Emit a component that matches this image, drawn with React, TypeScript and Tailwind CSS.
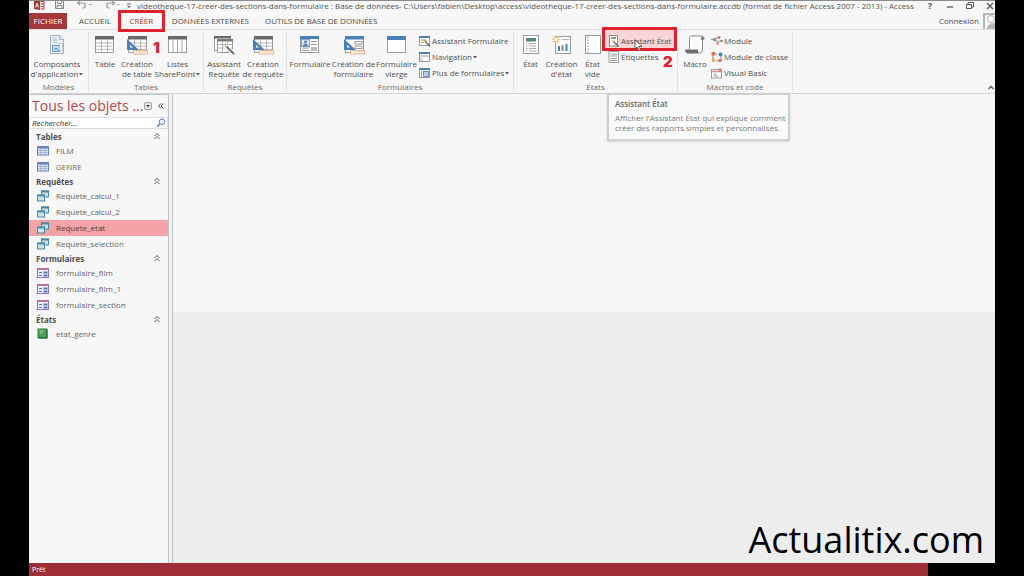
import React from "react";

type IconName =
  | "parts" | "table" | "tableDesign" | "list" | "queryWizard" | "form" | "formDesign"
  | "formBlank" | "report" | "reportDesign" | "reportBlank" | "macro";

const Ruler = () => (
  <>
    <path d="M1 4v11h12z" fill="#4a80ba" />
    <path d="M4 10v2.5h3z" fill="#fff" />
    <rect x="7.500" y="15.500" width="14" height="3.500" fill="#fff3e6" stroke="#e8b48a" />
    <path d="M10.500 16v1.500M13.500 16v1.500M16.500 16v1.500M19 16v1.500" stroke="#e8b48a" strokeWidth=".7" />
  </>
);

const Grid = ({ x = 1 }: { x?: number }) => (
  <g transform={`translate(${x - 1} 0)`}>
    <rect x="1.500" y="1.500" width="18" height="16" fill="#fff" stroke="#9a9a9a" />
    <rect x="1" y="1" width="19" height="3.500" fill="#686868" />
    <path d="M2 8h17M2 11.200h17M2 14.400h17M7.500 4v13M13.500 4v13" stroke="#a5a5a5" strokeWidth=".8" />
  </g>
);

const BigIcon = ({ name }: { name: IconName }) => (
  <svg viewBox="0 0 22 20" className="h-5 w-[22px] shrink-0" fill="none" aria-hidden="true">
    {name === "parts" && (
      <>
        <path d="M4.500 .5h9l4 4v14h-13z" fill="#eef2f6" stroke="#9db0c4" />
        <path d="M13.500 .5v4h4" stroke="#9db0c4" />
        <path d="M6.500 3h5M6.500 5h5M6.500 7h5" stroke="#b3c3d3" />
        <rect x="6.500" y="10.500" width="7" height="6" fill="#c9dbec" stroke="#6c98c6" />
        <rect x="13.500" y="8.500" width="3" height="7" fill="#fff" stroke="#9db0c4" strokeWidth=".7" />
        <path d="M8 15l2-2 2.500 2.500" stroke="#4a80ba" />
      </>
    )}
    {name === "table" && <Grid />}
    {name === "tableDesign" && (<><Grid x={2} /><Ruler /></>)}
    {name === "list" && (
      <>
        <rect x="1.500" y="1.500" width="18" height="16" fill="#fff" stroke="#9a9a9a" />
        <rect x="1" y="1" width="19" height="3.500" fill="#686868" />
        <path d="M6 4v13M10.500 4v13M15 4v13" stroke="#a5a5a5" />
      </>
    )}
    {name === "queryWizard" && (
      <>
        <rect x="1.500" y="1.500" width="16" height="14" fill="#fff" stroke="#9a9a9a" />
        <rect x="1" y="1" width="17" height="2.500" fill="#686868" />
        <rect x="4.500" y="4.500" width="15" height="13" fill="#fff" stroke="#9a9a9a" />
        <rect x="4" y="4" width="16" height="2.500" fill="#7a7a7a" />
        <path d="M5 9.500h14M5 13h14M9.500 6v11M14.500 6v11" stroke="#a5a5a5" strokeWidth=".8" />
        <path d="M12 10l9 9" stroke="#f7f7f7" strokeWidth="4.500" />
        <path d="M13.500 11.500l7.500 7.500" stroke="#747474" strokeWidth="2" />
        <path d="M12.500 8v4M10.500 10h4" stroke="#e5b07a" />
      </>
    )}
    {name === "form" && (
      <>
        <rect x="1.500" y="1.500" width="18" height="16" fill="#fff" stroke="#9a9a9a" />
        <rect x="1" y="1" width="19" height="3" fill="#4a80ba" />
        <rect x="2.500" y="4.500" width="8" height="7" fill="#dce8f4" stroke="#7b9fc8" />
        <circle cx="6.500" cy="7" r="1.400" fill="#4a80ba" />
        <path d="M4 11c0-3 5-3 5 0z" fill="#4a80ba" />
        <path d="M12 6.500h6M12 9.500h6M3 13h7M3 15.500h7" stroke="#9a9a9a" />
        <rect x="12" y="12" width="6" height="4" fill="#bcbcbc" />
      </>
    )}
    {name === "formDesign" && (
      <>
        <rect x="2.500" y="1.500" width="18" height="16" fill="#fff" stroke="#9a9a9a" />
        <rect x="2" y="1" width="19" height="3.500" fill="#4a80ba" />
        <rect x="12" y="6.500" width="7" height="2.500" stroke="#9a9a9a" />
        <rect x="12" y="11" width="7" height="2.500" stroke="#9a9a9a" />
        <Ruler />
      </>
    )}
    {name === "formBlank" && (
      <>
        <rect x="1.500" y="1.500" width="18" height="16" fill="#fff" stroke="#9a9a9a" />
        <rect x="1" y="1" width="19" height="4" fill="#4a80ba" />
      </>
    )}
    {name === "report" && (
      <>
        <rect x="3.500" y=".5" width="15" height="18" fill="#fff" stroke="#9a9a9a" />
        <rect x="6" y="3" width="10" height="3.500" fill="#4f8a72" />
        <path d="M6 8.500h1.500M9 8.500h7M6 11h1.500M9 11h7M6 13.500h1.500M9 13.500h7M6 16h1.500M9 16h7" stroke="#a8a8a8" />
      </>
    )}
    {name === "reportDesign" && (
      <>
        <rect x="4.500" y="1.500" width="15" height="17" fill="#fff" stroke="#9a9a9a" />
        <path d="M11 4.500h7" stroke="#b5b5b5" />
        <path d="M8 16v-5" stroke="#4a80ba" strokeWidth="2" />
        <path d="M11.500 16v-6" stroke="#888" strokeWidth="2" />
        <path d="M15.500 16v-7" stroke="#4a80ba" strokeWidth="2" />
        <path d="M5 0v9M.5 4.500h9M2 1.500l6 6M8 1.500l-6 6" stroke="#f0c283" strokeWidth="1.200" />
        <circle cx="5" cy="4.500" r="1.500" fill="#fff" />
      </>
    )}
    {name === "reportBlank" && (
      <>
        <rect x="3.500" y=".5" width="15" height="18" fill="#fff" stroke="#9a9a9a" />
        <path d="M6 1.500v17" stroke="#8a8a8a" strokeDasharray="1.500 1.500" />
      </>
    )}
    {name === "macro" && (
      <>
        <path d="M5.500 14V3.500c0-2 1-2.500 2-2.500h11v13c0 3-1 4-3 4" fill="#fff" stroke="#858585" />
        <path d="M18 1c3 0 3 4 1.500 4H17V2.500z" fill="#858585" />
        <path d="M1 14.500h13c0 2 .5 4 2 4H4c-2 0-3-2-3-4z" fill="#707070" />
      </>
    )}
  </svg>
);

type SmallName =
  | "formWizard" | "navigation" | "moreForms" | "reportWizard" | "labels" | "module" | "classModule" | "vb";

const SmallIcon = ({ name }: { name: SmallName }) => (
  <svg viewBox="0 0 12 12" className="size-3 shrink-0" fill="none" aria-hidden="true">
    {(name === "formWizard" || name === "navigation" || name === "moreForms") && (
      <>
        <rect x=".5" y="1.500" width="10" height="9" fill="#fff" stroke="#9a9a9a" />
        <rect x="0" y="1" width="11" height="2" fill="#4a80ba" />
      </>
    )}
    {name === "formWizard" && (
      <><path d="M2 5h4M2 7.500h3" stroke="#9a9a9a" /><path d="M6 6l5 5.500" stroke="#6a6a6a" strokeWidth="1.500" /><path d="M6 4v3M4.500 5.500h3" stroke="#e5a04e" /></>
    )}
    {name === "navigation" && (
      <><path d="M1 5h9" stroke="#9a9a9a" /><rect x="1" y="5" width="3" height="5" fill="#d5dde6" /></>
    )}
    {name === "moreForms" && (
      <><path d="M2.500 4v6" stroke="#9a9a9a" /><rect x="4.500" y="4.500" width="5" height="5" fill="#b9d0e6" stroke="#4a80ba" strokeWidth=".8" /></>
    )}
    {name === "reportWizard" && (
      <>
        <rect x="1.500" y=".5" width="8" height="10.500" fill="#fff" stroke="#8b8b8b" />
        <path d="M3 3h5" stroke="#4a8a6c" strokeWidth="1.500" />
        <path d="M6 7l4.500 4.500" stroke="#6a6a6a" strokeWidth="1.500" />
        <path d="M5.500 5v3M4 6.500h3" stroke="#e5a04e" strokeWidth=".8" />
      </>
    )}
    {name === "labels" && (
      <>
        <rect x="1" y=".5" width="9.500" height="11" fill="#fff" stroke="#9a9a9a" />
        <path d="M2.500 3h6.500M2.500 5h6.500M2.500 7.500h6.500M2.500 9.500h6.500" stroke="#9a9a9a" />
      </>
    )}
    {name === "module" && (
      <>
        <path d="M0 4.500h4l3-2.500M4 4.500l4 3.500M7.500 6h4" stroke="#888" />
        <circle cx="3.500" cy="4.500" r="1.700" fill="#7a9a86" />
        <circle cx="8" cy="2.500" r="1.500" fill="#d97a6a" />
        <circle cx="6.500" cy="8.500" r="1.500" fill="#e29a8e" />
        <circle cx="10.500" cy="6" r="1.300" fill="#888" />
      </>
    )}
    {name === "classModule" && (
      <>
        <path d="M2 10V3h4M5 10h5V4" stroke="#888" />
        <rect x=".5" y="1" width="3.500" height="3.500" fill="#e0734e" />
        <circle cx="9.500" cy="3.500" r="2" fill="#4a80ba" />
        <circle cx="2.500" cy="9.500" r="1.800" fill="#eab04e" />
        <rect x="7.500" y="8" width="3" height="3" fill="#d97a6a" />
      </>
    )}
    {name === "vb" && (
      <>
        <rect x=".5" y="2.500" width="10" height="8.500" fill="#fff" stroke="#9a9a9a" />
        <path d="M1 4.500h9" stroke="#d99080" strokeWidth="1.500" />
        <path d="M2.500 7h3M2.500 9h5" stroke="#9a9a9a" />
        <circle cx="9" cy="3" r="1.800" fill="#e0836e" />
      </>
    )}
  </svg>
);

const Caret = () => (
  <svg viewBox="0 0 4 3" className="ml-px inline-block h-[3px] w-1 align-middle" aria-hidden="true">
    <path d="M0 0h4L2 2.500z" fill="#555" />
  </svg>
);

const Big = ({ icon, lines, width, caret }: { icon: IconName; lines: string[]; width: string; caret?: boolean }) => (
  <button type="button" className={`flex shrink-0 flex-col items-center pt-0.5 ${width}`}>
    <BigIcon name={icon} />
    <span className="mt-1 text-center leading-[10px] whitespace-nowrap">
      {lines.map((line, i) => (
        <span key={line} className="block">
          {line}
          {caret && i === lines.length - 1 && <Caret />}
        </span>
      ))}
    </span>
  </button>
);

const Small = ({ icon, label, caret }: { icon: SmallName; label: string; caret?: boolean }) => (
  <button type="button" className="flex h-4 items-center gap-px whitespace-nowrap">
    <SmallIcon name={icon} />
    <span>{label}{caret && <Caret />}</span>
  </button>
);

const Group = ({ title, width, children }: { title: string; width: string; children: React.ReactNode }) => (
  <section aria-label={title} className={`flex shrink-0 flex-col justify-between border-r border-[#e2e2e2] ${width}`}>
    <div className="flex pt-0.5 pl-px">{children}</div>
    <h2 className="text-center leading-[10px] text-[#6a6a6a]">{title}</h2>
  </section>
);

type ItemKind = "table" | "query" | "form" | "report";

const ItemIcon = ({ kind }: { kind: ItemKind }) => (
  <svg viewBox="0 0 12 12" className="size-3 shrink-0" fill="none" aria-hidden="true">
    {kind === "table" && (
      <>
        <rect x=".5" y="1.500" width="11" height="8.500" fill="#dfe8f8" stroke="#6a83bd" />
        <rect x="0" y="1" width="12" height="2.500" fill="#6a83bd" />
        <path d="M4 3v7M8 3v7M1 5.500h10M1 7.700h10" stroke="#8fa8d8" strokeWidth=".8" />
      </>
    )}
    {kind === "query" && (
      <>
        <rect x="4.500" y="1" width="7" height="6" fill="#c6e2ec" stroke="#4f87a0" />
        <rect x="4" y=".5" width="8" height="2" fill="#4f87a0" />
        <rect x=".5" y="5" width="7" height="6" fill="#c6e2ec" stroke="#4f87a0" />
        <rect x="0" y="4.500" width="8" height="2" fill="#4797a8" />
      </>
    )}
    {kind === "form" && (
      <>
        <rect x=".5" y="1.500" width="11" height="9" fill="#f3f1fb" stroke="#8577b0" />
        <rect x="0" y="1" width="12" height="2" fill="#b5749a" />
        <path d="M2 5.500h3M2 8.500h3" stroke="#5f76bd" />
        <path d="M6.500 5.500h4M6.500 8.500h4" stroke="#5f76bd" strokeWidth="2" />
      </>
    )}
    {kind === "report" && (
      <>
        <rect x="1" y="1" width="9" height="9" fill="#47a055" stroke="#35783f" />
        <path d="M2.500 3h4M2.500 5h3" stroke="#a6dcae" />
        <path d="M10 2v8H2" stroke="#2b5c33" />
      </>
    )}
  </svg>
);

const sections: { title: string; kind: ItemKind; items: string[] }[] = [
  { title: "Tables", kind: "table", items: ["FILM", "GENRE"] },
  { title: "Requêtes", kind: "query", items: ["Requete_calcul_1", "Requete_calcul_2", "Requete_etat", "Requete_selection"] },
  { title: "Formulaires", kind: "form", items: ["formulaire_film", "formulaire_film_1", "formulaire_section"] },
  { title: "États", kind: "report", items: ["etat_genre"] },
];

const TitleBar = () => (
  <header className="flex h-[13px] items-start border-t border-[#8a8a8a] pr-px text-[#555]">
    <svg viewBox="0 0 108 12" className="h-3 w-[108px] shrink-0" fill="none" aria-hidden="true">
      <path d="M5 0h6v9L5 8z" fill="#a4373a" />
      <path d="M6.500 6.500L8 2l1.500 4.500M7 5h2" stroke="#fff" strokeWidth=".8" />
      <path d="M11.500.500h3.500v7.500h-3.500M11.500 3h3M11.500 5.500h3" stroke="#a4373a" />
      <path d="M26.500 0v7.500h8V0M28.500 0v2.500h4V0M28 7.500v-3h5v3" stroke="#888" />
      <path d="M49 2h5c3 0 3 5 0 5h-1M51 0l-2.500 2L51 4" stroke="#999" strokeWidth="1.200" />
      <path d="M60 3h3l-1.500 1.500z" fill="#999" />
      <path d="M85 2h-5c-3 0-3 5 0 5h1M83 0l2.500 2L83 4" stroke="#999" strokeWidth="1.200" />
      <path d="M88 3h3l-1.500 1.500z" fill="#999" />
      <path d="M98 3h4" stroke="#666" />
      <path d="M98 5h4l-2 2z" fill="#666" />
    </svg>
    <h1 className="min-w-0 truncate text-[8px] leading-[10px]">
      videotheque-17-creer-des-sections-dans-formulaire : Base de données- C:\Users\fabien\Desktop\access\videotheque-17-creer-des-sections-dans-formulaire.accdb (format de fichier Access 2007 - 2013) - Access
    </h1>
    <div className="ml-auto flex shrink-0 gap-3">
      <button type="button" className="w-2 text-[9px] leading-[9px] font-bold" aria-label="Aide">?</button>
      <button type="button" aria-label="Réduire">
        <svg viewBox="0 0 8 8" className="size-2"><path d="M1 5h6" stroke="#555" strokeWidth="1.300" /></svg>
      </button>
      <button type="button" aria-label="Restaurer">
        <svg viewBox="0 0 8 8" className="size-2" fill="none"><path d="M.5 2.500h5v4h-5zM2 2V.5h5.500V5H6" stroke="#555" /></svg>
      </button>
      <button type="button" aria-label="Fermer">
        <svg viewBox="0 0 8 8" className="size-2"><path d="M1 1l6 6M7 1L1 7" stroke="#555" strokeWidth="1.300" /></svg>
      </button>
    </div>
  </header>
);

const Tabs = () => (
  <nav className="flex h-[17px] items-stretch border-b border-[#dcdcdc] text-[8px] leading-4 whitespace-nowrap text-[#4a4a4a]">
    <button type="button" className="w-[38px] bg-[#a4373a] text-white">FICHIER</button>
    <button type="button" className="ml-3">ACCUEIL</button>
    <button type="button" className="relative ml-[7px] w-[47px] text-[#a4373a]">
      CRÉER
      <span className="pointer-events-none absolute inset-x-0 -top-[3px] -bottom-[3px] border-3 border-[#e0202c]" />
    </button>
    <button type="button" className="ml-[7px]">DONNÉES EXTERNES</button>
    <button type="button" className="ml-4">OUTILS DE BASE DE DONNÉES</button>
    <button type="button" className="ml-auto flex gap-1">
      Connexion
      <svg viewBox="0 0 12 16" className="h-4 w-3" aria-hidden="true">
        <path d="M0 0h12v16H0z" fill="#b5b5b5" />
        <path d="M2 2h10v8c-4 0-7 1-8 6H2z" fill="#f7f7f7" />
        <circle cx="8" cy="6" r="3.500" fill="#fff" stroke="#b5b5b5" />
      </svg>
    </button>
  </nav>
);

const Ribbon = () => (
  <div className="relative flex h-16 border-b border-[#d4d4d4] py-px text-[8px] text-[#4f4f4f]">
    <Group title="Modèles" width="w-[60px]">
      <Big icon="parts" lines={["Composants", "d'application"]} width="w-[54px]" caret />
    </Group>
    <Group title="Tables" width="w-[115px]">
      <Big icon="table" lines={["Table"]} width="w-[30px]" />
      <Big icon="tableDesign" lines={["Création", "de table"]} width="w-[34px]" />
      <Big icon="list" lines={["Listes", "SharePoint"]} width="w-[47px]" caret />
    </Group>
    <Group title="Requêtes" width="w-[83px]">
      <Big icon="queryWizard" lines={["Assistant", "Requête"]} width="w-[38px]" />
      <Big icon="tableDesign" lines={["Création", "de requête"]} width="w-[40px]" />
    </Group>
    <Group title="Formulaires" width="w-[227px]">
      <Big icon="form" lines={["Formulaire"]} width="w-[44px]" />
      <Big icon="formDesign" lines={["Création de", "formulaire"]} width="w-[43px]" />
      <Big icon="formBlank" lines={["Formulaire", "vierge"]} width="w-[43px]" />
      <div className="ml-px flex flex-col">
        <Small icon="formWizard" label="Assistant Formulaire" />
        <Small icon="navigation" label="Navigation" caret />
        <Small icon="moreForms" label="Plus de formulaires" caret />
      </div>
    </Group>
    <Group title="États" width="w-[164px]">
      <Big icon="report" lines={["État"]} width="w-[31px]" />
      <Big icon="reportDesign" lines={["Création", "d'état"]} width="w-[31px]" />
      <Big icon="reportBlank" lines={["État", "vide"]} width="w-[31px]" />
      <div className="flex flex-col">
        <div className="relative isolate">
          <span className="pointer-events-none absolute -inset-x-1.5 -top-1.5 -bottom-0.5 -z-10 border-3 border-[#e0202c] bg-[#f9d4d4]" />
          <Small icon="reportWizard" label="Assistant État" />
          <svg viewBox="0 0 9 13" className="absolute top-1.5 left-[26px] h-[13px] w-[9px]" aria-hidden="true">
            <path d="M1 1v9l2-2 2 4 1.500-1-2-3.500H8z" fill="#fff" stroke="#444" strokeWidth=".8" />
          </svg>
        </div>
        <Small icon="labels" label="Étiquettes" />
      </div>
    </Group>
    <Group title="Macros et code" width="w-[115px]">
      <Big icon="macro" lines={["Macro"]} width="w-[32px]" />
      <div className="flex flex-col">
        <Small icon="module" label="Module" />
        <Small icon="classModule" label="Module de classe" />
        <Small icon="vb" label="Visual Basic" />
      </div>
    </Group>
    <button type="button" className="mt-auto mr-px mb-0.5 ml-auto" aria-label="Réduire le ruban">
      <svg viewBox="0 0 6 5" className="h-[5px] w-1.5" fill="none"><path d="M.5 4L3 1.500 5.500 4" stroke="#555" strokeWidth="1.300" /></svg>
    </button>
    <span className="absolute top-2.5 left-[124px] font-[Inter,sans-serif] text-[15px] leading-4 font-black text-[#e0202c]">1</span>
    <span className="absolute top-6 left-[634px] font-[Inter,sans-serif] text-[15px] leading-4 font-black text-[#e0202c]">2</span>
    <div role="tooltip" className="absolute top-[63px] left-[578px] z-10 w-[183px] border-2 border-[#cfcfcf] bg-[#fafafa] px-1.5 pt-1 pb-1.5 shadow-sm">
      <p className="mb-1 leading-[10px] font-semibold text-[#666]">Assistant État</p>
      <p className="leading-[10px] whitespace-nowrap text-[#7a7a7a]">
        Afficher l'Assistant État qui explique comment<br />créer des rapports simples et personnalisés.
      </p>
    </div>
  </div>
);

const Sidebar = () => (
  <aside className="flex w-[144px] shrink-0 flex-col border-r border-[#bfc3c7] bg-[#f0f0f0] pr-[3px]">
    <div className="flex grow flex-col border-t border-r border-[#bfc3c7] bg-[#f7f7f7]">
      <div className="flex h-[22px] items-center pl-[3px] text-[#b1474b]">
        <h2 className="text-[14px] leading-5 whitespace-nowrap">Tous les objets ...</h2>
        <button type="button" className="ml-auto" aria-label="Menu des objets">
          <svg viewBox="0 0 9 9" className="size-2"><rect x=".5" y=".5" width="8" height="8" rx="2" fill="#e3e6ea" stroke="#8c939b" /><path d="M2.500 3.500h4L4.500 6z" fill="#333" /></svg>
        </button>
        <button type="button" className="mr-1 ml-1.5" aria-label="Réduire le volet">
          <svg viewBox="0 0 6 6" className="size-1.5" fill="none"><path d="M3 .5L.5 3 3 5.500M5.500.5L3 3l2.500 2.500" stroke="#444" /></svg>
        </button>
      </div>
      <label className="flex h-3 items-center border border-[#dadde0] bg-white">
        <input type="text" aria-label="Rechercher" placeholder="Rechercher..." className="min-w-0 grow pl-0.5 text-[8px] leading-[10px] italic outline-none placeholder:text-[#222]" />
        <svg viewBox="0 0 12 10" className="h-2.5 w-3 shrink-0" fill="none" aria-hidden="true">
          <circle cx="7" cy="3.800" r="2.800" fill="#eef4fb" stroke="#5b83b5" /><path d="M5 6L2 9" stroke="#5b83b5" strokeWidth="1.500" />
        </svg>
      </label>
      <div className="pt-px text-[8px]">
        {sections.map((s) => (
          <section key={s.title}>
            <h3 className="flex h-[13px] items-center justify-between pr-2 pl-[7px] leading-3 font-bold text-[#505050]">
              {s.title}
              <svg viewBox="0 0 6 7" className="h-[7px] w-1.5" fill="none" aria-hidden="true"><path d="M.5 3L3 .5 5.500 3M.5 6L3 3.500 5.500 6" stroke="#444" strokeWidth=".9" /></svg>
            </h3>
            <ul>
              {s.items.map((item) => (
                <li key={item}>
                  <button type="button" className={`flex h-4 w-full items-center gap-[7px] pl-2 ${item === "Requete_etat" ? "bg-[#f2a4a7] text-[#5a3a3c]" : "text-[#666]"}`}>
                    <ItemIcon kind={s.kind} />
                    {item}
                  </button>
                </li>
              ))}
            </ul>
          </section>
        ))}
      </div>
    </div>
  </aside>
);

export default function App() {
  return (
    <div className="flex min-h-screen flex-col bg-black pr-[29px] pl-[29px] font-['Open_Sans','Noto_Sans',sans-serif]">
      <div className="flex grow flex-col bg-[#f7f7f7]">
        <TitleBar />
        <Tabs />
        <Ribbon />
        <div className="flex grow">
          <Sidebar />
          <main className="flex grow flex-col">
            <div className="flex-[218]" />
            <div className="flex flex-[251] items-end justify-end bg-[#ededed] px-[11px]">
              <p className="text-[36px] leading-[46px] text-black">Actualitix.com</p>
            </div>
          </main>
        </div>
      </div>
      <footer className="mr-[67px] h-[13px] bg-[#9e2d37] pl-[3px] text-[7px] leading-[14px] text-white">Prêt</footer>
    </div>
  );
}
